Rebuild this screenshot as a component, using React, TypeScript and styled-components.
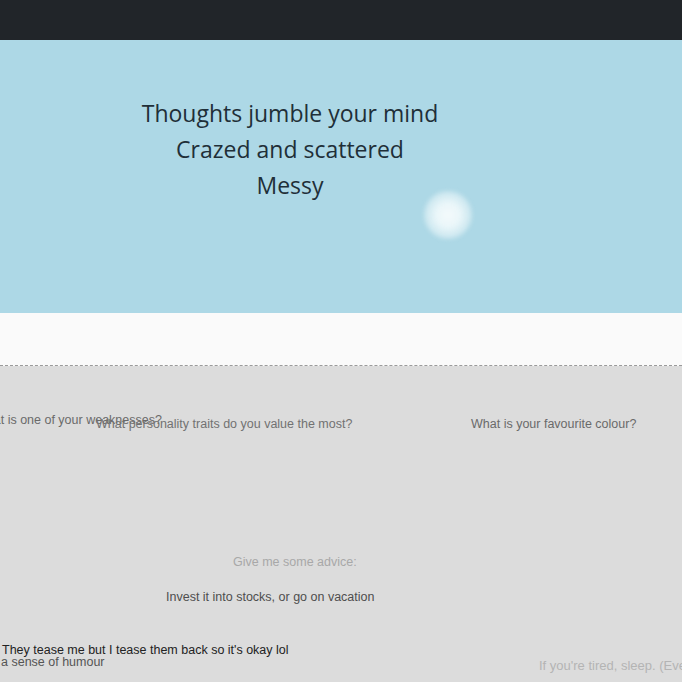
import React from "react";
import styled, { createGlobalStyle } from "styled-components";

const Global = createGlobalStyle`
  html, body { margin: 0; padding: 0; background: #dcdcdc; }
  body { font-family: "Liberation Sans", Arial, sans-serif; overflow: hidden; }
`;

const Nav = styled.nav`
  height: 40px;
  background: #212529;
`;

const Hero = styled.section`
  height: 273px;
  background: #add8e6;
  position: relative;
  display: flex;
`;

const HeroText = styled.div`
  width: 580px;
  padding-top: 55px;
  text-align: center;
  font-family: "Open Sans", "Noto Sans", sans-serif;
  font-size: 23px;
  line-height: 36px;
  color: #1f2f38;
`;

const Glow = styled.div`
  position: absolute;
  left: 424px;
  top: 151px;
  width: 48px;
  height: 48px;
  border-radius: 50%;
  background: radial-gradient(circle, #f4fafc 0%, #eaf6f9 35%, rgba(234, 246, 249, 0.6) 60%, rgba(173, 216, 230, 0) 100%);
  filter: blur(2px);
`;

const Strip = styled.div`
  height: 52px;
  background: #fafafa;
  border-bottom: 1px dashed #9a9a9a;
`;

const Canvas = styled.div`
  position: relative;
  height: 316px;
  background: #dcdcdc;
  overflow: hidden;
`;

const Note = styled.div<{ $x: number; $y: number; $c: string; $s?: number }>`
  position: absolute;
  left: ${(p) => p.$x}px;
  top: ${(p) => p.$y}px;
  color: ${(p) => p.$c};
  font-size: ${(p) => p.$s ?? 12.5}px;
  line-height: 14px;
  white-space: nowrap;
`;

const notes = [
  { x: -25, y: 47, c: "#6a6a6a", t: "What is one of your weaknesses?" },
  { x: 96, y: 51, c: "#727272", t: "What personality traits do you value the most?" },
  { x: 471, y: 51, c: "#6a6a6a", t: "What is your favourite colour?" },
  { x: 233, y: 189, c: "#a8a8a8", t: "Give me some advice:" },
  { x: 166, y: 224, c: "#4e4e4e", t: "Invest it into stocks, or go on vacation" },
  { x: 2, y: 277, c: "#222222", t: "They tease me but I tease them back so it's okay lol" },
  { x: 1, y: 289, c: "#555555", t: "a sense of humour" },
  { x: 539, y: 293, c: "#b4b4b4", t: "If you're tired, sleep. (Even if it's only for a little while)", s: 13 },
];

export default function App() {
  return (
    <>
      <Global />
      <Nav />
      <Hero>
        <HeroText>
          <div>Thoughts jumble your mind</div>
          <div>Crazed and scattered</div>
          <div>Messy</div>
        </HeroText>
        <Glow />
      </Hero>
      <Strip />
      <Canvas>
        {notes.map((n, i) => (
          <Note key={i} $x={n.x} $y={n.y} $c={n.c} $s={n.s}>
            {n.t}
          </Note>
        ))}
      </Canvas>
    </>
  );
}
